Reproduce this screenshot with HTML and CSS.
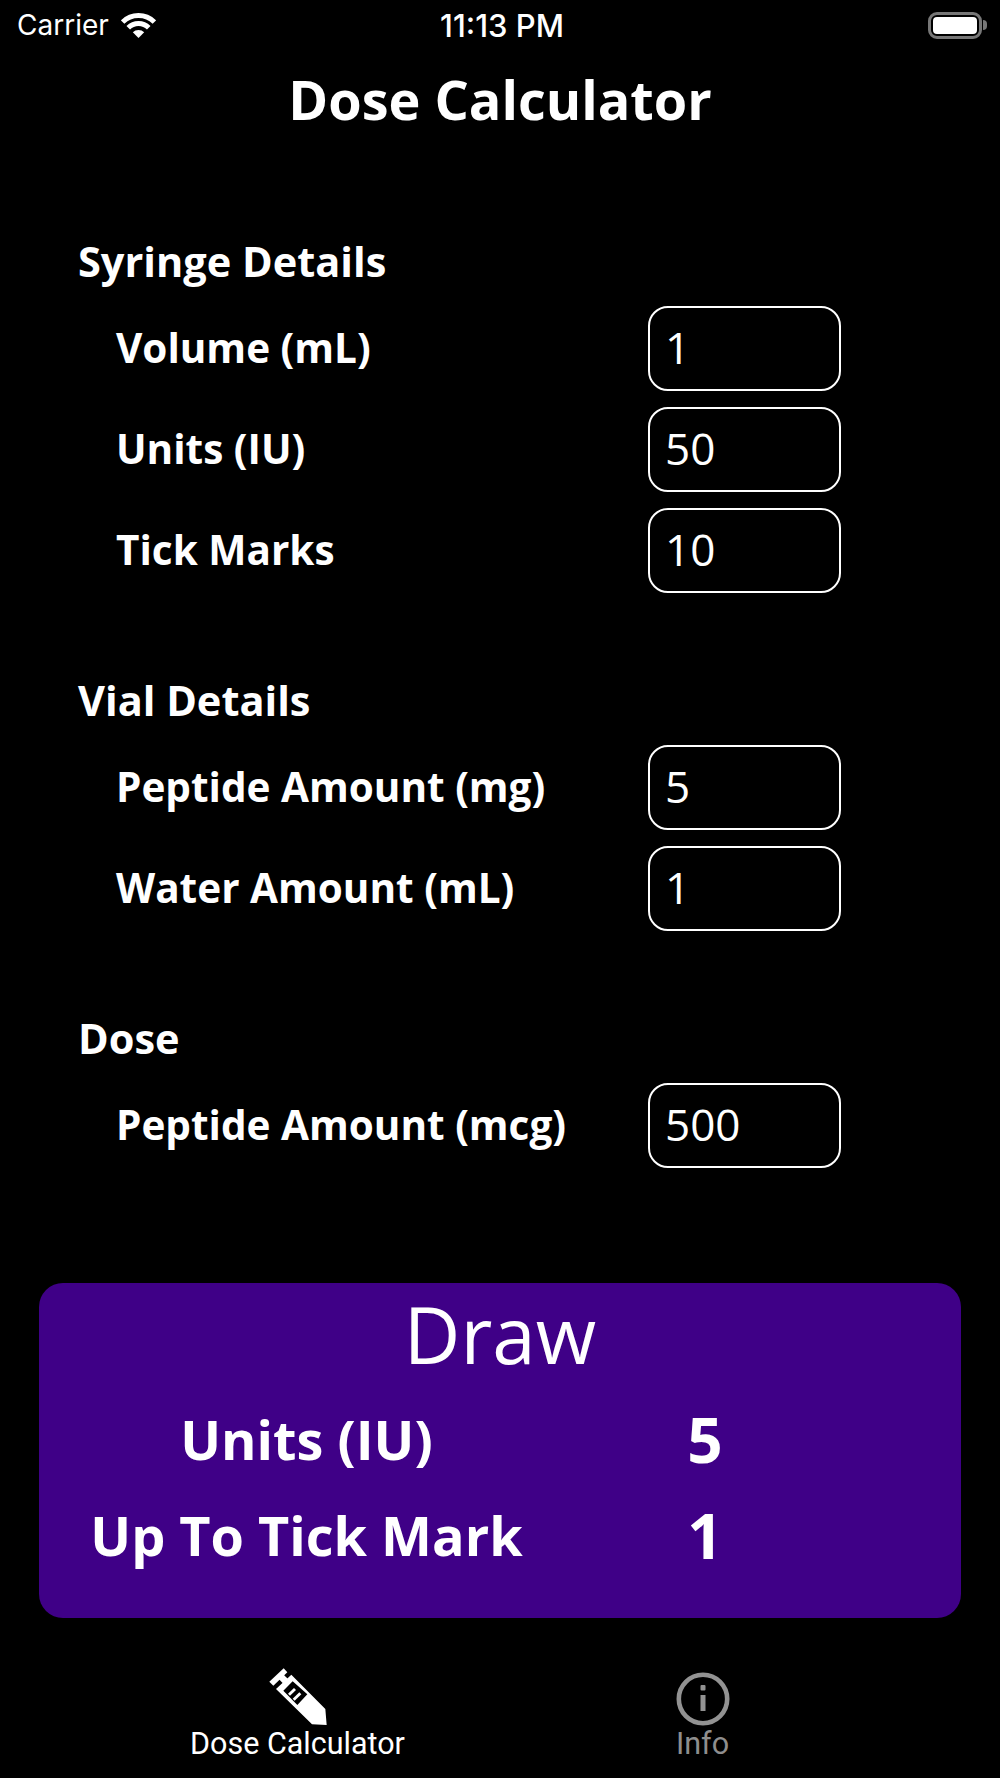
FILE: index.html
```html
<!DOCTYPE html>
<html lang="en">
    <head>
        <meta charset="UTF-8">
        <title>Dose Calculator</title>
        <link rel="stylesheet" href="styles.css">
    </head>
    <body>
        <div class="screen">
            <div class="status-bar">
                <div class="status-left">
                    <span>Carrier</span>
                    <svg class="wifi" width="35" height="25" viewBox="0 0 35 25">
                        <path d="M17.500 25 L11.800 19.300 A8 8 0 0 1 23.200 19.300 Z" fill="#fff"/>
                        <path d="M7.250 14.750 A14.500 14.500 0 0 1 27.750 14.750" fill="none" stroke="#fff" stroke-width="5"/>
                        <path d="M1.600 9.100 A22.500 22.500 0 0 1 33.400 9.100" fill="none" stroke="#fff" stroke-width="5"/>
                    </svg>
                </div>
                <div class="status-time">11:13 PM</div>
                <div class="status-right">
                    <div class="battery"><div class="battery-fill"></div></div>
                    <div class="battery-cap"></div>
                </div>
            </div>

            <h1 class="title">Dose Calculator</h1>

            <section class="group group-syringe">
                <h2>Syringe Details</h2>
                <div class="row"><span class="label">Volume (mL)</span><div class="field">1</div></div>
                <div class="row"><span class="label">Units (IU)</span><div class="field">50</div></div>
                <div class="row"><span class="label">Tick Marks</span><div class="field">10</div></div>
            </section>

            <section class="group">
                <h2>Vial Details</h2>
                <div class="row"><span class="label">Peptide Amount (mg)</span><div class="field">5</div></div>
                <div class="row"><span class="label">Water Amount (mL)</span><div class="field">1</div></div>
            </section>

            <section class="group">
                <h2>Dose</h2>
                <div class="row"><span class="label">Peptide Amount (mcg)</span><div class="field">500</div></div>
            </section>

            <div class="draw">
                <div class="draw-title">Draw</div>
                <div class="draw-row"><span class="draw-label">Units (IU)</span><span class="draw-value">5</span></div>
                <div class="draw-row"><span class="draw-label">Up To Tick Mark</span><span class="draw-value">1</span></div>
            </div>

            <nav class="tabs">
                <div class="tab tab-active">
                    <svg width="58" height="58" viewBox="21 27 174 174" fill="#fff">
                        <path d="M22 68 L65 28 L76 40 L34 80 Z"/>
                        <path d="M48 58 L62 44 L78 60 L64 74 Z"/>
                        <path fill-rule="evenodd" d="M42 90 L88 47 L190 150 L194 198 L150 196 Z
                                 M64 95 L92 67 L136 106 L106 138 Z"/>
                        <path d="M78 104 L96 87 L102 93 L84 110 Z"/>
                        <path d="M92 119 L112 100 L118 106 L98 125 Z"/>
                    </svg>
                    <span>Dose Calculator</span>
                </div>
                <div class="tab">
                    <svg width="54" height="54" viewBox="0 0 54 54" fill="#929292">
                        <circle cx="27" cy="27" r="24.200" fill="none" stroke="#929292" stroke-width="4.600"/>
                        <rect x="24.500" y="13" width="5" height="5.500" rx="1"/>
                        <rect x="24.500" y="23" width="5" height="16"/>
                    </svg>
                    <span>Info</span>
                </div>
            </nav>
        </div>
    </body>
</html>
```

FILE: styles.css
```css
:root{
    box-sizing: border-box;
    font-family: "Open Sans", "Noto Sans", sans-serif;
}
*{
    box-sizing: inherit;
}
body{
    margin: 0;
    background: #000;
    color: #fff;
}
.screen{
    width: 1000px;
    height: 1778px;
    display: flex;
    flex-direction: column;
    overflow: hidden;
}

/*status bar*/
.status-bar{
    height: 50px;
    padding: 0 13px 0 17px;
    display: grid;
    grid-template-columns: 1fr auto 1fr;
    align-items: center;
    font-family: "Inter", sans-serif;
    font-size: 28px;
}
.status-left{
    display: flex;
    align-items: center;
    gap: 12px;
}
.status-time{
    font-size: 31px;
    font-weight: 500;
}
.status-right{
    display: flex;
    justify-content: flex-end;
    align-items: center;
}
.battery{
    width: 54px;
    height: 27px;
    border: 3px solid #777;
    border-radius: 9px;
    padding: 2px;
}
.battery-fill{
    height: 100%;
    background: #fff;
    border-radius: 4px;
}
.battery-cap{
    width: 4px;
    height: 10px;
    margin-left: 1px;
    background: #777;
    border-radius: 0 4px 4px 0;
}

.title{
    margin: 0;
    height: 100px;
    padding-top: 19px;
    text-align: center;
    font-size: 54px;
    line-height: 60px;
    font-weight: 700;
}

/*form*/
.group{
    margin-top: 85px;
    padding-left: 78px;
}
.group-syringe{
    margin-top: 89px;
}
.group h2{
    margin: 0;
    height: 46px;
    font-size: 41.500px;
    line-height: 44px;
    font-weight: 700;
}
.row{
    display: flex;
    justify-content: space-between;
    align-items: center;
    width: 763px;
    height: 85px;
    padding-left: 38px;
    margin-top: 16px;
}
.group h2 + .row{
    margin-top: 21px;
}
.label{
    font-size: 40.500px;
    font-weight: 700;
    padding-bottom: 3px;
}
.field{
    width: 193px;
    height: 85px;
    padding-left: 15px;
    border: 2px solid #fff;
    border-radius: 20px;
    font-size: 44px;
    line-height: 78px;
}

/*result card*/
.draw{
    margin: 115px 39px 0;
    height: 335px;
    background: #3f0087;
    border-radius: 24px;
}
.draw-title{
    text-align: center;
    font-size: 78px;
    line-height: 90px;
    padding-top: 6px;
    height: 108px;
}
.draw-row{
    display: grid;
    grid-template-columns: 535px 90px;
    column-gap: 86px;
    height: 96px;
    align-items: center;
    font-size: 54px;
    font-weight: 700;
}
.draw-label{
    text-align: center;
}
.draw-value{
    text-align: center;
    font-size: 62px;
}

/*tab bar*/
.tabs{
    flex: 1;
    display: grid;
    grid-template-columns: 1fr 1fr;
    padding: 50px 95px 0;
    font-family: "Roboto", sans-serif;
    font-size: 30.500px;
}
.tab{
    display: flex;
    flex-direction: column;
    align-items: center;
    color: #8e8e8e;
    height: 91px;
    justify-content: flex-end;
}
.tab svg{
    margin-bottom: 3px;
}
.tab-active{
    color: #fff;
}
.tab span{
    line-height: 30px;
}
```
